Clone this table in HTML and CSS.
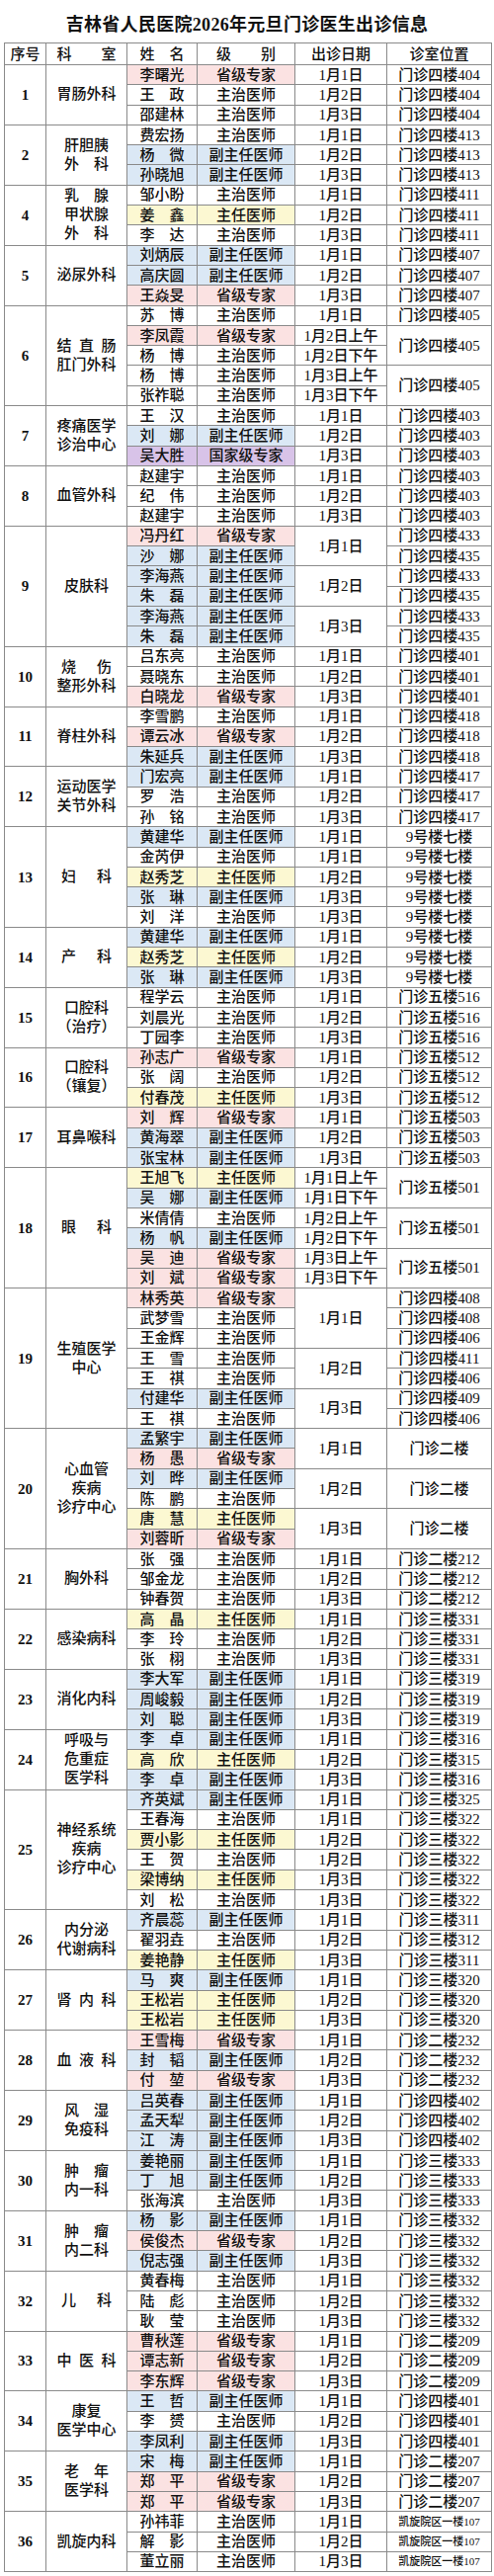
FILE: index.html
```html
<!DOCTYPE html>
<html lang="zh-CN">
<head>
<meta charset="utf-8">
<title>吉林省人民医院2026年元旦门诊医生出诊信息</title>
<link rel="stylesheet" href="styles.css">
</head>
<body>
<div class="title">吉林省人民医院2026年元旦门诊医生出诊信息</div>
<table class="sched">
<colgroup>
<col class="c1"><col class="c2"><col class="c3"><col class="c4"><col class="c5"><col class="c6">
</colgroup>
<thead>
<tr class="hd"><th>序号</th><th>科　　室</th><th>姓　名</th><th>级　　别</th><th>出诊日期</th><th>诊室位置</th></tr>
</thead>
<tbody>
<tr><td rowspan="3" class="no">1</td><td rowspan="3" class="dp">胃肠外科</td><td class="p">李曙光</td><td class="p">省级专家</td><td>1月1日</td><td>门诊四楼404</td></tr>
<tr><td>王　政</td><td>主治医师</td><td>1月2日</td><td>门诊四楼404</td></tr>
<tr><td>邵建林</td><td>主治医师</td><td>1月3日</td><td>门诊四楼404</td></tr>

<tr><td rowspan="3" class="no">2</td><td rowspan="3" class="dp">肝胆胰<br>外　科</td><td>费宏扬</td><td>主治医师</td><td>1月1日</td><td>门诊四楼413</td></tr>
<tr><td class="b">杨　微</td><td class="b">副主任医师</td><td>1月2日</td><td>门诊四楼413</td></tr>
<tr><td class="b">孙晓旭</td><td class="b">副主任医师</td><td>1月3日</td><td>门诊四楼413</td></tr>

<tr><td rowspan="3" class="no">4</td><td rowspan="3" class="dp">乳　腺<br>甲状腺<br>外　科</td><td>邹小盼</td><td>主治医师</td><td>1月1日</td><td>门诊四楼411</td></tr>
<tr><td class="y">姜　鑫</td><td class="y">主任医师</td><td>1月2日</td><td>门诊四楼411</td></tr>
<tr><td>李　达</td><td>主治医师</td><td>1月3日</td><td>门诊四楼411</td></tr>

<tr><td rowspan="3" class="no">5</td><td rowspan="3" class="dp">泌尿外科</td><td class="b">刘炳辰</td><td class="b">副主任医师</td><td>1月1日</td><td>门诊四楼407</td></tr>
<tr><td class="b">高庆圆</td><td class="b">副主任医师</td><td>1月2日</td><td>门诊四楼407</td></tr>
<tr><td class="p">王焱旻</td><td class="p">省级专家</td><td>1月3日</td><td>门诊四楼407</td></tr>

<tr><td rowspan="5" class="no">6</td><td rowspan="5" class="dp">结&#8194;直&#8194;肠<br>肛门外科</td><td>苏　博</td><td>主治医师</td><td>1月1日</td><td>门诊四楼405</td></tr>
<tr><td class="p">李凤霞</td><td class="p">省级专家</td><td>1月2日上午</td><td rowspan="2">门诊四楼405</td></tr>
<tr><td>杨　博</td><td>主治医师</td><td>1月2日下午</td></tr>
<tr><td>杨　博</td><td>主治医师</td><td>1月3日上午</td><td rowspan="2">门诊四楼405</td></tr>
<tr><td>张祚聪</td><td>主治医师</td><td>1月3日下午</td></tr>

<tr><td rowspan="3" class="no">7</td><td rowspan="3" class="dp">疼痛医学<br>诊治中心</td><td>王　汉</td><td>主治医师</td><td>1月1日</td><td>门诊四楼403</td></tr>
<tr><td class="b">刘　娜</td><td class="b">副主任医师</td><td>1月2日</td><td>门诊四楼403</td></tr>
<tr><td class="v">吴大胜</td><td class="v">国家级专家</td><td>1月3日</td><td>门诊四楼403</td></tr>

<tr><td rowspan="3" class="no">8</td><td rowspan="3" class="dp">血管外科</td><td>赵建宇</td><td>主治医师</td><td>1月1日</td><td>门诊四楼403</td></tr>
<tr><td>纪　伟</td><td>主治医师</td><td>1月2日</td><td>门诊四楼403</td></tr>
<tr><td>赵建宇</td><td>主治医师</td><td>1月3日</td><td>门诊四楼403</td></tr>

<tr><td rowspan="6" class="no">9</td><td rowspan="6" class="dp">皮肤科</td><td class="p">冯丹红</td><td class="p">省级专家</td><td rowspan="2">1月1日</td><td>门诊四楼433</td></tr>
<tr><td class="b">沙　娜</td><td class="b">副主任医师</td><td>门诊四楼435</td></tr>
<tr><td class="b">李海燕</td><td class="b">副主任医师</td><td rowspan="2">1月2日</td><td>门诊四楼433</td></tr>
<tr><td class="b">朱　磊</td><td class="b">副主任医师</td><td>门诊四楼435</td></tr>
<tr><td class="b">李海燕</td><td class="b">副主任医师</td><td rowspan="2">1月3日</td><td>门诊四楼433</td></tr>
<tr><td class="b">朱　磊</td><td class="b">副主任医师</td><td>门诊四楼435</td></tr>

<tr><td rowspan="3" class="no">10</td><td rowspan="3" class="dp"><span class="wide">烧　伤</span><br>整形外科</td><td>吕东亮</td><td>主治医师</td><td>1月1日</td><td>门诊四楼401</td></tr>
<tr><td>聂晓东</td><td>主治医师</td><td>1月2日</td><td>门诊四楼401</td></tr>
<tr><td class="p">白晓龙</td><td class="p">省级专家</td><td>1月3日</td><td>门诊四楼401</td></tr>

<tr><td rowspan="3" class="no">11</td><td rowspan="3" class="dp">脊柱外科</td><td>李雪鹏</td><td>主治医师</td><td>1月1日</td><td>门诊四楼418</td></tr>
<tr><td class="p">谭云冰</td><td class="p">省级专家</td><td>1月2日</td><td>门诊四楼418</td></tr>
<tr><td class="b">朱延兵</td><td class="b">副主任医师</td><td>1月3日</td><td>门诊四楼418</td></tr>

<tr><td rowspan="3" class="no">12</td><td rowspan="3" class="dp">运动医学<br>关节外科</td><td class="b">门宏亮</td><td class="b">副主任医师</td><td>1月1日</td><td>门诊四楼417</td></tr>
<tr><td>罗　浩</td><td>主治医师</td><td>1月2日</td><td>门诊四楼417</td></tr>
<tr><td>孙　铭</td><td>主治医师</td><td>1月3日</td><td>门诊四楼417</td></tr>

<tr><td rowspan="5" class="no">13</td><td rowspan="5" class="dp"><span class="wide">妇　科</span></td><td class="b">黄建华</td><td class="b">副主任医师</td><td>1月1日</td><td>9号楼七楼</td></tr>
<tr><td>金芮伊</td><td>主治医师</td><td>1月1日</td><td>9号楼七楼</td></tr>
<tr><td class="y">赵秀芝</td><td class="y">主任医师</td><td>1月2日</td><td>9号楼七楼</td></tr>
<tr><td class="b">张　琳</td><td class="b">副主任医师</td><td>1月3日</td><td>9号楼七楼</td></tr>
<tr><td>刘　洋</td><td>主治医师</td><td>1月3日</td><td>9号楼七楼</td></tr>

<tr><td rowspan="3" class="no">14</td><td rowspan="3" class="dp"><span class="wide">产　科</span></td><td class="b">黄建华</td><td class="b">副主任医师</td><td>1月1日</td><td>9号楼七楼</td></tr>
<tr><td class="y">赵秀芝</td><td class="y">主任医师</td><td>1月2日</td><td>9号楼七楼</td></tr>
<tr><td class="b">张　琳</td><td class="b">副主任医师</td><td>1月3日</td><td>9号楼七楼</td></tr>

<tr><td rowspan="3" class="no">15</td><td rowspan="3" class="dp">口腔科<br>（治疗）</td><td>程学云</td><td>主治医师</td><td>1月1日</td><td>门诊五楼516</td></tr>
<tr><td>刘晨光</td><td>主治医师</td><td>1月2日</td><td>门诊五楼516</td></tr>
<tr><td>丁园李</td><td>主治医师</td><td>1月3日</td><td>门诊五楼516</td></tr>

<tr><td rowspan="3" class="no">16</td><td rowspan="3" class="dp">口腔科<br>（镶复）</td><td class="p">孙志广</td><td class="p">省级专家</td><td>1月1日</td><td>门诊五楼512</td></tr>
<tr><td>张　阔</td><td>主治医师</td><td>1月2日</td><td>门诊五楼512</td></tr>
<tr><td class="y">付春茂</td><td class="y">主任医师</td><td>1月3日</td><td>门诊五楼512</td></tr>

<tr><td rowspan="3" class="no">17</td><td rowspan="3" class="dp">耳鼻喉科</td><td class="p">刘　辉</td><td class="p">省级专家</td><td>1月1日</td><td>门诊五楼503</td></tr>
<tr><td class="b">黄海翠</td><td class="b">副主任医师</td><td>1月2日</td><td>门诊五楼503</td></tr>
<tr><td class="b">张宝林</td><td class="b">副主任医师</td><td>1月3日</td><td>门诊五楼503</td></tr>

<tr><td rowspan="6" class="no">18</td><td rowspan="6" class="dp"><span class="wide">眼　科</span></td><td class="y">王旭飞</td><td class="y">主任医师</td><td>1月1日上午</td><td rowspan="2">门诊五楼501</td></tr>
<tr><td class="b">吴　娜</td><td class="b">副主任医师</td><td>1月1日下午</td></tr>
<tr><td>米倩倩</td><td>主治医师</td><td>1月2日上午</td><td rowspan="2">门诊五楼501</td></tr>
<tr><td class="b">杨　帆</td><td class="b">副主任医师</td><td>1月2日下午</td></tr>
<tr><td class="p">吴　迪</td><td class="p">省级专家</td><td>1月3日上午</td><td rowspan="2">门诊五楼501</td></tr>
<tr><td class="p">刘　斌</td><td class="p">省级专家</td><td>1月3日下午</td></tr>

<tr><td rowspan="7" class="no">19</td><td rowspan="7" class="dp">生殖医学<br>中心</td><td class="p">林秀英</td><td class="p">省级专家</td><td rowspan="3">1月1日</td><td>门诊四楼408</td></tr>
<tr><td>武梦雪</td><td>主治医师</td><td>门诊四楼408</td></tr>
<tr><td>王金辉</td><td>主治医师</td><td>门诊四楼406</td></tr>
<tr><td>王　雪</td><td>主治医师</td><td rowspan="2">1月2日</td><td>门诊四楼411</td></tr>
<tr><td>王　祺</td><td>主治医师</td><td>门诊四楼406</td></tr>
<tr><td class="b">付建华</td><td class="b">副主任医师</td><td rowspan="2">1月3日</td><td>门诊四楼409</td></tr>
<tr><td>王　祺</td><td>主治医师</td><td>门诊四楼406</td></tr>

<tr><td rowspan="6" class="no">20</td><td rowspan="6" class="dp">心血管<br>疾病<br>诊疗中心</td><td class="b">孟繁宇</td><td class="b">副主任医师</td><td rowspan="2">1月1日</td><td rowspan="2">门诊二楼</td></tr>
<tr><td class="p">杨　愚</td><td class="p">省级专家</td></tr>
<tr><td class="b">刘　晔</td><td class="b">副主任医师</td><td rowspan="2">1月2日</td><td rowspan="2">门诊二楼</td></tr>
<tr><td>陈　鹏</td><td>主治医师</td></tr>
<tr><td class="y">唐　慧</td><td class="y">主任医师</td><td rowspan="2">1月3日</td><td rowspan="2">门诊二楼</td></tr>
<tr><td class="p">刘蓉昕</td><td class="p">省级专家</td></tr>

<tr><td rowspan="3" class="no">21</td><td rowspan="3" class="dp">胸外科</td><td>张　强</td><td>主治医师</td><td>1月1日</td><td>门诊二楼212</td></tr>
<tr><td>邹金龙</td><td>主治医师</td><td>1月2日</td><td>门诊二楼212</td></tr>
<tr><td>钟春贺</td><td>主治医师</td><td>1月3日</td><td>门诊二楼212</td></tr>

<tr><td rowspan="3" class="no">22</td><td rowspan="3" class="dp">感染病科</td><td class="y">高　晶</td><td class="y">主任医师</td><td>1月1日</td><td>门诊三楼331</td></tr>
<tr><td>李　玲</td><td>主治医师</td><td>1月2日</td><td>门诊三楼331</td></tr>
<tr><td>张　栩</td><td>主治医师</td><td>1月3日</td><td>门诊三楼331</td></tr>

<tr><td rowspan="3" class="no">23</td><td rowspan="3" class="dp">消化内科</td><td class="b">李大军</td><td class="b">副主任医师</td><td>1月1日</td><td>门诊三楼319</td></tr>
<tr><td class="b">周峻毅</td><td class="b">副主任医师</td><td>1月2日</td><td>门诊三楼319</td></tr>
<tr><td class="b">刘　聪</td><td class="b">副主任医师</td><td>1月3日</td><td>门诊三楼319</td></tr>

<tr><td rowspan="3" class="no">24</td><td rowspan="3" class="dp">呼吸与<br>危重症<br>医学科</td><td class="b">李　卓</td><td class="b">副主任医师</td><td>1月1日</td><td>门诊三楼316</td></tr>
<tr><td class="y">高　欣</td><td class="y">主任医师</td><td>1月2日</td><td>门诊三楼315</td></tr>
<tr><td class="b">李　卓</td><td class="b">副主任医师</td><td>1月3日</td><td>门诊三楼316</td></tr>

<tr><td rowspan="6" class="no">25</td><td rowspan="6" class="dp">神经系统<br>疾病<br>诊疗中心</td><td class="b">齐英斌</td><td class="b">副主任医师</td><td>1月1日</td><td>门诊三楼325</td></tr>
<tr><td>王春海</td><td>主治医师</td><td>1月1日</td><td>门诊三楼322</td></tr>
<tr><td class="y">贾小影</td><td class="y">主任医师</td><td>1月2日</td><td>门诊三楼322</td></tr>
<tr><td>王　贺</td><td>主治医师</td><td>1月2日</td><td>门诊三楼322</td></tr>
<tr><td class="y">梁博纳</td><td class="y">主任医师</td><td>1月3日</td><td>门诊三楼322</td></tr>
<tr><td>刘　松</td><td>主治医师</td><td>1月3日</td><td>门诊三楼322</td></tr>

<tr><td rowspan="3" class="no">26</td><td rowspan="3" class="dp">内分泌<br>代谢病科</td><td class="b">齐晨蕊</td><td class="b">副主任医师</td><td>1月1日</td><td>门诊三楼311</td></tr>
<tr><td>翟羽垚</td><td>主治医师</td><td>1月2日</td><td>门诊三楼312</td></tr>
<tr><td class="y">姜艳静</td><td class="y">主任医师</td><td>1月3日</td><td>门诊三楼311</td></tr>

<tr><td rowspan="3" class="no">27</td><td rowspan="3" class="dp">肾&#8194;内&#8194;科</td><td class="b">马　爽</td><td class="b">副主任医师</td><td>1月1日</td><td>门诊三楼320</td></tr>
<tr><td class="y">王松岩</td><td class="y">主任医师</td><td>1月2日</td><td>门诊三楼320</td></tr>
<tr><td class="y">王松岩</td><td class="y">主任医师</td><td>1月3日</td><td>门诊三楼320</td></tr>

<tr><td rowspan="3" class="no">28</td><td rowspan="3" class="dp">血&#8194;液&#8194;科</td><td class="p">王雪梅</td><td class="p">省级专家</td><td>1月1日</td><td>门诊二楼232</td></tr>
<tr><td class="b">封　韬</td><td class="b">副主任医师</td><td>1月2日</td><td>门诊二楼232</td></tr>
<tr><td class="p">付　堃</td><td class="p">省级专家</td><td>1月3日</td><td>门诊二楼232</td></tr>

<tr><td rowspan="3" class="no">29</td><td rowspan="3" class="dp">风　湿<br>免疫科</td><td class="b">吕英春</td><td class="b">副主任医师</td><td>1月1日</td><td>门诊四楼402</td></tr>
<tr><td class="b">孟天犁</td><td class="b">副主任医师</td><td>1月2日</td><td>门诊四楼402</td></tr>
<tr><td class="b">江　涛</td><td class="b">副主任医师</td><td>1月3日</td><td>门诊四楼402</td></tr>

<tr><td rowspan="3" class="no">30</td><td rowspan="3" class="dp">肿　瘤<br>内一科</td><td class="b">姜艳丽</td><td class="b">副主任医师</td><td>1月1日</td><td>门诊三楼333</td></tr>
<tr><td class="b">丁　旭</td><td class="b">副主任医师</td><td>1月2日</td><td>门诊三楼333</td></tr>
<tr><td>张海滨</td><td>主治医师</td><td>1月3日</td><td>门诊三楼333</td></tr>

<tr><td rowspan="3" class="no">31</td><td rowspan="3" class="dp">肿　瘤<br>内二科</td><td class="b">杨　影</td><td class="b">副主任医师</td><td>1月1日</td><td>门诊三楼332</td></tr>
<tr><td class="p">侯俊杰</td><td class="p">省级专家</td><td>1月2日</td><td>门诊三楼332</td></tr>
<tr><td class="b">倪志强</td><td class="b">副主任医师</td><td>1月3日</td><td>门诊三楼332</td></tr>

<tr><td rowspan="3" class="no">32</td><td rowspan="3" class="dp"><span class="wide">儿　科</span></td><td>黄春梅</td><td>主治医师</td><td>1月1日</td><td>门诊三楼332</td></tr>
<tr><td>陆　彪</td><td>主治医师</td><td>1月2日</td><td>门诊三楼332</td></tr>
<tr><td>耿　莹</td><td>主治医师</td><td>1月3日</td><td>门诊三楼332</td></tr>

<tr><td rowspan="3" class="no">33</td><td rowspan="3" class="dp">中&#8194;医&#8194;科</td><td class="p">曹秋莲</td><td class="p">省级专家</td><td>1月1日</td><td>门诊二楼209</td></tr>
<tr><td class="p">谭志新</td><td class="p">省级专家</td><td>1月2日</td><td>门诊二楼209</td></tr>
<tr><td class="p">李东辉</td><td class="p">省级专家</td><td>1月3日</td><td>门诊二楼209</td></tr>

<tr><td rowspan="3" class="no">34</td><td rowspan="3" class="dp">康复<br>医学中心</td><td class="b">王　哲</td><td class="b">副主任医师</td><td>1月1日</td><td>门诊四楼401</td></tr>
<tr><td>李　赟</td><td>主治医师</td><td>1月2日</td><td>门诊四楼401</td></tr>
<tr><td class="b">李凤利</td><td class="b">副主任医师</td><td>1月3日</td><td>门诊四楼401</td></tr>

<tr><td rowspan="3" class="no">35</td><td rowspan="3" class="dp">老　年<br>医学科</td><td class="b">宋　梅</td><td class="b">副主任医师</td><td>1月1日</td><td>门诊二楼207</td></tr>
<tr><td class="p">郑　平</td><td class="p">省级专家</td><td>1月2日</td><td>门诊二楼207</td></tr>
<tr><td class="p">郑　平</td><td class="p">省级专家</td><td>1月3日</td><td>门诊二楼207</td></tr>

<tr><td rowspan="3" class="no">36</td><td rowspan="3" class="dp">凯旋内科</td><td>孙祎菲</td><td>主治医师</td><td>1月1日</td><td class="sm">凯旋院区一楼107</td></tr>
<tr><td>解　影</td><td>主治医师</td><td>1月2日</td><td class="sm">凯旋院区一楼107</td></tr>
<tr><td>董立丽</td><td>主治医师</td><td>1月3日</td><td class="sm">凯旋院区一楼107</td></tr>
</tbody>
</table>
</body>
</html>
```

FILE: styles.css
```css
html, body {
  margin: 0;
  padding: 0;
  background: #ffffff;
}

body {
  width: 500px;
  font-family: "Liberation Serif", "Noto Sans CJK SC", serif;
  color: #111111;
}

.title {
  box-sizing: border-box;
  height: 43px;
  padding-top: 14px;
  font-size: 18px;
  line-height: 22px;
  font-weight: 700;
  letter-spacing: 0.3px;
  text-align: center;
  color: #111111;
}

.sched {
  margin-left: 4px;
  width: 493px;
  table-layout: fixed;
  border-collapse: collapse;
  font-size: 15px;
}

.c1 { width: 42px; }
.c2 { width: 82px; }
.c3 { width: 71px; }
.c4 { width: 99px; }
.c5 { width: 93px; }
.c6 { width: 106px; }

.sched th,
.sched td {
  border: 1px solid #8a8a8a;
  padding: 0;
  text-align: center;
  vertical-align: middle;
  white-space: nowrap;
  line-height: 18px;
  font-weight: 500;
}

.sched tr.hd {
  height: 22px;
}

.sched tbody tr {
  height: 20.3px;
}

.sched td.no {
  font-weight: 700;
}

.sched td.dp {
  line-height: 19px;
}

.wide {
  letter-spacing: 3px;
  padding-left: 3px;
}

.sched td.sm {
  font-size: 11px;
}

.p { background: #fbe2e2; }
.b { background: #dbe8f5; }
.y { background: #fcf8d2; }
.v { background: #d8c3e8; }
```
